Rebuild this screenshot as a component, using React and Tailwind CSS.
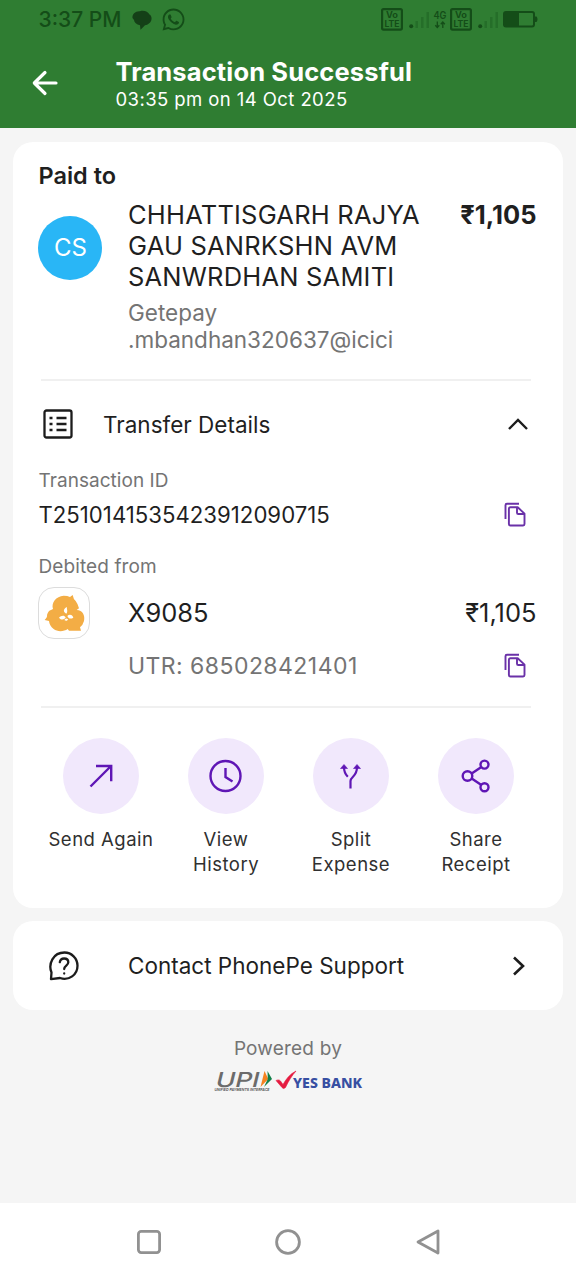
import { FaWhatsapp } from 'react-icons/fa';

const actions = [
  { lines: ['Send Again'], icon: <SendIcon /> },
  { lines: ['View', 'History'], icon: <HistoryIcon /> },
  { lines: ['Split', 'Expense'], icon: <SplitIcon /> },
  { lines: ['Share', 'Receipt'], icon: <ShareIcon /> },
];

function SendIcon() {
  return (
    <svg width="76" height="76" viewBox="0 0 76 76" fill="none" stroke="#5f16b5" strokeWidth="2.4">
      <path d="M27.5 48.5 48 28M33 28h15.2v15.3" />
    </svg>
  );
}

function HistoryIcon() {
  return (
    <svg width="76" height="76" viewBox="0 0 76 76" fill="none" stroke="#5f16b5" strokeWidth="2.4">
      <circle cx="37.500" cy="38" r="15" />
      <path d="M37.500 30v9l7 4.500" />
    </svg>
  );
}

function SplitIcon() {
  return (
    <svg width="76" height="76" viewBox="0 0 76 76" fill="none" stroke="#5f16b5" strokeWidth="2.2">
      <path d="M37.500 50.500V43c0-4.500 6.500-4 6.500-14M31 29c0 5 1.500 7.500 3.800 9.800" />
      <path d="M27.500 30.500 31 26.500l3.500 4zM40.500 30.500 44 26.500l3.500 4z" fill="#5f16b5" strokeWidth="0.600" />
    </svg>
  );
}

function ShareIcon() {
  return (
    <svg width="76" height="76" viewBox="0 0 76 76" fill="none" stroke="#5f16b5" strokeWidth="2.4">
      <circle cx="29.500" cy="38" r="4.800" />
      <circle cx="46.500" cy="26.600" r="4" />
      <circle cx="46.500" cy="49.200" r="4" />
      <path d="m33.700 35.400 9.300-6.200M33.700 40.600l9.300 6.200" />
    </svg>
  );
}

function CopyIcon() {
  return (
    <svg width="22" height="26" viewBox="0 0 22 26" fill="none" stroke="#6a31a8" strokeWidth="1.9" strokeLinejoin="round">
      <path d="M1.500 17V3.200q0-1.400 1.400-1.400H15" />
      <path d="M6.300 5.300h7.400l6.800 6.300v10.500q0 1.400-1.400 1.400H6.300q-1.400 0-1.400-1.400V6.700q0-1.400 1.400-1.400z" />
      <path d="M13 5.600v5.100q0 1.300 1.300 1.300h6" />
    </svg>
  );
}

function VolteIcon() {
  return (
    <svg width="22" height="23" viewBox="0 0 22 23" className="-mt-[2px]">
      <rect x="1.100" y="1.100" width="19.800" height="20.500" rx="1.500" fill="none" stroke="#144d18" strokeWidth="2.200" />
      <g fill="#144d18" fontFamily="Inter, sans-serif" fontWeight="700" fontSize="8.500">
        <text x="5" y="10.300" textLength="12" lengthAdjust="spacingAndGlyphs">Vo</text>
        <text x="3.500" y="18.500" textLength="15" lengthAdjust="spacingAndGlyphs">LTE</text>
      </g>
    </svg>
  );
}

function SignalIcon() {
  return (
    <svg width="21" height="18" viewBox="0 0 21 18">
      <circle cx="2.200" cy="15.200" r="2" fill="#144d18" />
      <path d="M6.500 10H9v7H6.500zM12 6h2.500v11H12zM17.500 1H20v16h-2.500z" fill="#256e29" />
    </svg>
  );
}

function BankIcon() {
  return (
    <svg width="52" height="52" viewBox="54 110 156 156" className="shrink-0">
      <path
        d="M99 176C93 158 108 137 131 136Q143 136 150 140L158 134Q160 146 167 152Q174 161 177 174L170 179C188 179 196 196 192 212Q188 226 180 231L183 241L147 241L143 236C132 244 112 245 101 236C92 229 88 222 87 212L74 209Q83 200 81 194Q85 180 93 179Z"
        fill="#f3ad45"
      />
      <path d="M141 170c-2 6 4 12-2 20-9-4-11-14 2-20zM137 201c-4-7-13-6-20 1 6 8 17 7 20-1zM142 197c7-7 16-3 18 5-8 5-15 3-18-5zM133 209c3-5 7-6 11-2-1 5-7 6-11 2z" fill="#fff" />
    </svg>
  );
}

function StatusBar() {
  return (
    <div className="flex h-10 items-center pl-[38.5px] pr-[38px]">
      <span className="w-[93px] text-[21px] leading-10 font-medium text-[#144d18]">3:37 PM</span>
      <svg width="21" height="21" viewBox="0 0 21 21" className="mr-[8px]">
        <path d="M0.500 8C0 4 3.500 0.800 8 1.200c4-1.200 8 .3 9.500 3.300 2.500 1.300 2.800 5.500.6 8-1.500 1.700-3.600 2.500-5.100 2.700l-4.500 4.600-.5-4.600C4.500 14.500 2.200 12.500 2 10z" fill="#144017" />
      </svg>
      <FaWhatsapp className="-mt-[2px] size-[25px] text-[#144d18]" />
      <div className="ml-auto flex items-center">
        <VolteIcon />
        <div className="ml-[6px]"><SignalIcon /></div>
        <svg width="14" height="20" viewBox="0 0 14 20" className="-mt-px ml-[3px]">
          <text x="0.500" y="9" textLength="13" lengthAdjust="spacingAndGlyphs" fill="#144d18" fontFamily="Inter, sans-serif" fontWeight="600" fontSize="10">4G</text>
          <path d="M4.300 11.500v6M2.300 15.300l2 2.300 2-2.300M9.800 18v-6M7.800 14.200l2-2.300 2 2.300" fill="none" stroke="#144d18" strokeWidth="1.300" />
        </svg>
        <div className="ml-[3px]"><VolteIcon /></div>
        <div className="ml-[6px]"><SignalIcon /></div>
        <svg width="35" height="17" viewBox="0 0 35 17" className="-mt-[2px] ml-[4px]">
          <rect x="1" y="1" width="30" height="14.500" rx="2" fill="none" stroke="#144d18" strokeWidth="2" />
          <path d="M2 2h14v13H2zM32 5.500h1.500q1 1 1 2.800t-1 2.800H32z" fill="#144d18" />
        </svg>
      </div>
    </div>
  );
}

function Header() {
  return (
    <header className="h-32 bg-[#2f7d32]">
      <StatusBar />
      <div className="flex items-start">
        <svg width="28" height="26" viewBox="0 0 28 26" className="mt-[30px] ml-[31px]" fill="none" stroke="#fff" strokeWidth="3.2" strokeLinecap="round" strokeLinejoin="round">
          <path d="M14 2.500 3.300 13 14 23.500M3.500 13h21.500" />
        </svg>
        <div className="ml-[56.5px] whitespace-nowrap text-white">
          <h1 className="mt-4 text-[25.5px] leading-8 font-bold tracking-[0.14px]">Transaction Successful</h1>
          <p className="-mt-px text-[18.5px] leading-6 tracking-[0.42px]">03:35 pm on 14 Oct 2025</p>
        </div>
      </div>
    </header>
  );
}

function PaymentCard() {
  return (
    <section className="mt-[14px] mr-[13px] ml-[12.5px] h-[766px] rounded-[20px] bg-white pt-[18px] pr-[26.5px] pl-[25.5px]">
      <h2 className="pl-[0.5px] text-[23.5px] leading-8 font-semibold">Paid to</h2>
      <div className="mt-[7px] flex whitespace-nowrap">
        <div className="mt-[17px] flex size-16 items-center justify-center rounded-full bg-[#29b6f6] pl-px text-[24px] text-white">CS</div>
        <div className="ml-[26px]">
          <p className="text-[25.5px] leading-[31.2px] tracking-[0.2px]">
            CHHATTISGARH RAJYA<br />GAU SANRKSHN AVM<br />SANWRDHAN SAMITI
          </p>
          <p className="mt-[6px] text-[22.5px] leading-[27.3px] text-[#747474]">Getepay<br />.mbandhan320637@icici</p>
        </div>
        <p className="ml-auto text-[25.5px] leading-[31.2px] font-bold">₹1,105</p>
      </div>

      <div className="mt-[26px] ml-[3px] h-[2px] w-[490px] bg-[#f0f0f0]" />

      <div className="mt-[24px] flex h-10 items-center">
        <svg width="30" height="30" viewBox="0 0 30 30" className="-mt-[2px] ml-[4.5px]" fill="none" stroke="#1c1c1c" strokeWidth="2.3">
          <rect x="1.500" y="1.500" width="27" height="27" rx="2" />
          <path d="M6.500 9h3M6.500 15h3M6.500 21h3M13.500 9h10M13.500 15h10M13.500 21h10" />
        </svg>
        <span className="ml-[30.5px] text-[22.5px]">Transfer Details</span>
        <svg width="20" height="14" viewBox="0 0 20 14" className="-mt-[3px] mr-[8.5px] ml-auto" fill="none" stroke="#1c1c1c" strokeWidth="2.4">
          <path d="m1 12 9-9 9 9" />
        </svg>
      </div>

      <p className="mt-[24px] pl-[0.5px] text-[19px] leading-6 tracking-[0.04px] text-[#747474]">Transaction ID</p>
      <div className="mt-[2px] flex h-10 items-center justify-between pl-[0.5px]">
        <span className="-mt-px text-[22.2px]">T2510141535423912090715</span>
        <div className="mr-[11px]"><CopyIcon /></div>
      </div>

      <p className="mt-[20px] pl-[0.5px] text-[19px] leading-6 tracking-[0.1px] text-[#747474]">Debited from</p>
      <div className="mt-[8px] flex h-[52px] items-center">
        <div className="flex size-[52px] items-center justify-center rounded-[16px] border border-[#dcdcdc]">
          <BankIcon />
        </div>
        <span className="-mt-px ml-[38px] text-[25.5px]">X9085</span>
        <span className="-mt-px ml-auto text-[25.5px]">₹1,105</span>
      </div>
      <div className="mt-[7px] flex h-10 items-center justify-between pl-[90px]">
        <span className="text-[23px] tracking-[0.45px] text-[#747474]">UTR: 685028421401</span>
        <div className="mr-[11px]"><CopyIcon /></div>
      </div>

      <div className="mt-[19.5px] ml-[3px] h-[2px] w-[490px] bg-[#f0f0f0]" />

      <div className="mt-[30.5px] grid grid-cols-[125px_125px_125px_125px]">
        {actions.map((action) => (
          <div key={action.lines[0]} className="flex flex-col items-center">
            <div className="size-[76px] rounded-full bg-[#f1e8fc]">{action.icon}</div>
            <div className="mt-[12.7px] pl-px text-center text-[18.5px] leading-[25.4px] tracking-[0.5px] text-[#303030]">
              {action.lines.map((line) => <p key={line}>{line}</p>)}
            </div>
          </div>
        ))}
      </div>
    </section>
  );
}

function SupportCard() {
  return (
    <section className="mt-[13px] mr-[13px] ml-[12.5px] flex h-[89px] items-center rounded-[20px] bg-white">
      <svg width="30" height="30" viewBox="0 0 30 30" className="ml-[36.5px]" fill="none" stroke="#1c1c1c" strokeWidth="2.3" strokeLinecap="round" strokeLinejoin="round">
        <path d="M2.500 21.500C-1 13 4 1.500 15.500 1.500c7 0 13 5.800 13 13.200 0 9-8.500 15.300-17.500 12.300L2 28.200z" />
        <path d="M10.800 11.200c.4-2.500 2-3.700 4.300-3.700 2.500 0 4.200 1.500 4.200 3.700 0 3.400-4.100 3.300-4.100 6.800M15.200 22.500v.1" />
      </svg>
      <span className="ml-[49px] text-[22.5px]">Contact PhonePe Support</span>
      <svg width="14" height="20" viewBox="0 0 14 20" className="mr-[37px] ml-auto" fill="none" stroke="#1c1c1c" strokeWidth="2.6">
        <path d="m2 1.500 9 8.500-9 8.500" />
      </svg>
    </section>
  );
}

function PoweredBy() {
  return (
    <div className="mt-[26px] flex h-[167px] flex-col items-center">
      <p className="text-[19px] leading-[25px] tracking-[0.2px] text-[#747474]">Powered by</p>
      <svg width="150" height="30" viewBox="0 -6 150 30" className="mt-[2px]">
        <text x="0" y="0" transform="translate(1.500 17.500) skewX(-14)" textLength="43.500" lengthAdjust="spacingAndGlyphs" fill="#6b6b6b" fontFamily="Inter, sans-serif" fontWeight="500" fontSize="20.500">UPI</text>
        <path d="m51.500 2 3.800 8-7.800 8z" fill="#f58220" />
        <path d="m54.500 2 4.500 8-8 8 3.800-8z" fill="#12804a" />
        <text x="1.500" y="22" textLength="55" lengthAdjust="spacingAndGlyphs" fill="#4a4a4a" fontFamily="Inter, sans-serif" fontStyle="italic" fontWeight="600" fontSize="4">UNIFIED PAYMENTS INTERFACE</text>
        <path d="M63 11.500c2-1 3.500-.7 4.500.5l2.500 3.500C73 10 77 5 83 2c-4 4.500-7.500 10-10.500 16.500q-2 2-3.500 0z" fill="#e51b40" stroke="#e51b40" strokeWidth="0.600" />
        <text x="80" y="18.500" textLength="69" lengthAdjust="spacingAndGlyphs" fill="#374fa2" fontFamily="'Noto Sans', sans-serif" fontWeight="800" fontSize="14">YES BANK</text>
      </svg>
    </div>
  );
}

function NavBar() {
  return (
    <nav className="flex h-[77px] items-center justify-center bg-white">
      <svg width="24" height="24" viewBox="0 0 24 24" fill="none" stroke="#919191" strokeWidth="2.8">
        <rect x="1.400" y="1.400" width="21.200" height="21.200" rx="2.800" />
      </svg>
      <svg width="26" height="26" viewBox="0 0 26 26" className="ml-[114px] mr-[115px]" fill="none" stroke="#919191" strokeWidth="2.8">
        <circle cx="13" cy="13" r="11.400" />
      </svg>
      <svg width="24" height="26" viewBox="0 0 24 26" fill="none" stroke="#919191" strokeWidth="2.8" strokeLinejoin="round">
        <path d="M22 2v22L2 13z" />
      </svg>
    </nav>
  );
}

export default function App() {
  return (
    <div className="h-[1280px] w-[576px] overflow-hidden bg-[#f5f5f5] font-['Inter',sans-serif] text-[#1f1f1f]">
      <Header />
      <PaymentCard />
      <SupportCard />
      <PoweredBy />
      <NavBar />
    </div>
  );
}
